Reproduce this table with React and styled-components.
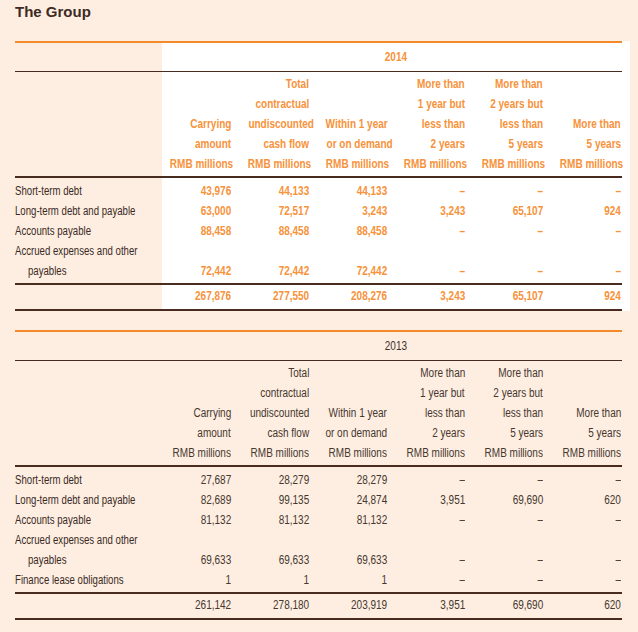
import React from "react";
import styled, { createGlobalStyle } from "styled-components";

const GlobalStyle = createGlobalStyle`
  html, body {
    margin: 0;
    padding: 0;
    background: #fdeee1;
  }
  body {
    font-family: "Liberation Sans", Arial, sans-serif;
  }
`;

const Page = styled.div`
  width: 638px;
  height: 632px;
  box-sizing: border-box;
  padding: 3px 0 0 15px;
  overflow: hidden;
`;

const Title = styled.h2`
  margin: 0 0 20px;
  font: bold 15px/18px "Liberation Sans", Arial, sans-serif;
  color: #3d2a24;
`;

const Section = styled.div`
  width: 615px;
  padding-right: 8px;
  box-sizing: border-box;
  margin-bottom: 19px;
  background: ${(p) =>
    p.$highlight ? "linear-gradient(to right, transparent 147px, #ffffff 147px)" : "transparent"};
`;

const Row = styled.div`
  display: grid;
  grid-template-columns: 139px repeat(6, 78px);
  font-size: 12.5px;
  line-height: 20px;
`;

const YearRow = styled(Row)`
  border-top: 2px solid #f58a2b;
  border-bottom: 1px solid #4a2b20;
  height: 28px;
  line-height: 28px;
`;

const Year = styled.div`
  grid-column: 2 / 8;
  padding-left: 16px;
  text-align: center;
  color: ${(p) => (p.$accent ? "#f7923a" : "#3f302b")};
  font-weight: ${(p) => (p.$accent ? "bold" : "normal")};
`;

const HeadRow = styled(Row)`
  padding: 2px 0;
  border-bottom: 2px solid #4a2b20;
`;

const Body = styled.div`
  padding: 3px 0 2px;
  border-bottom: 2px solid #4a2b20;
`;

const TotalRow = styled(Row)`
  padding: 1px 0 3px;
  border-bottom: 2px solid #4a2b20;
`;

// condensed face: the reference uses a narrow grotesque we don't have
const Narrow = styled.span`
  display: inline-block;
  white-space: nowrap;
  transform: scaleX(${(p) => p.$scale || 0.8});
  transform-origin: ${(p) => p.$origin || "right"} center;
`;

const Label = styled.div`
  color: #3b2a24;
`;

const LabelLine = styled.div`
  padding-left: ${(p) => (p.$indent ? "13px" : "0")};
`;

const Cell = styled.div`
  align-self: end;
  text-align: right;
  padding-right: 1px;
  color: ${(p) => (p.$accent ? "#f7923a" : "#47372f")};
  font-weight: ${(p) => (p.$accent ? "bold" : "normal")};
`;

const Line = styled.div``;

const headers = [
  ["Carrying", "amount"],
  ["Total", "contractual", "undiscounted", "cash flow"],
  ["Within 1 year", "or on demand"],
  ["More than", "1 year but", "less than", "2 years"],
  ["More than", "2 years but", "less than", "5 years"],
  ["More than", "5 years"],
];

const tables = [
  {
    year: "2014",
    accent: true,
    rows: [
      [["Short-term debt"], "43,976", "44,133", "44,133", "–", "–", "–"],
      [["Long-term debt and payable"], "63,000", "72,517", "3,243", "3,243", "65,107", "924"],
      [["Accounts payable"], "88,458", "88,458", "88,458", "–", "–", "–"],
      [["Accrued expenses and other", "payables"], "72,442", "72,442", "72,442", "–", "–", "–"],
    ],
    total: ["267,876", "277,550", "208,276", "3,243", "65,107", "924"],
  },
  {
    year: "2013",
    accent: false,
    rows: [
      [["Short-term debt"], "27,687", "28,279", "28,279", "–", "–", "–"],
      [["Long-term debt and payable"], "82,689", "99,135", "24,874", "3,951", "69,690", "620"],
      [["Accounts payable"], "81,132", "81,132", "81,132", "–", "–", "–"],
      [["Accrued expenses and other", "payables"], "69,633", "69,633", "69,633", "–", "–", "–"],
      [["Finance lease obligations"], "1", "1", "1", "–", "–", "–"],
    ],
    total: ["261,142", "278,180", "203,919", "3,951", "69,690", "620"],
  },
];

function LiquidityTable({ table }) {
  const { year, accent, rows, total } = table;
  return (
    <Section $highlight={accent}>
      <YearRow>
        <Year $accent={accent}>
          <Narrow $origin="center">{year}</Narrow>
        </Year>
      </YearRow>
      <HeadRow>
        <div />
        {headers.map((lines, i) => (
          <Cell key={i} $accent={accent}>
            {[...lines, "RMB millions"].map((l, j) => (
              <Line key={j}>
                <Narrow>{l}</Narrow>
              </Line>
            ))}
          </Cell>
        ))}
      </HeadRow>
      <Body>
        {rows.map(([label, ...values]) => (
          <Row key={label[0]}>
            <Label>
              {label.map((l, j) => (
                <LabelLine key={j} $indent={j > 0}>
                  <Narrow $origin="left" $scale={0.77}>
                    {l}
                  </Narrow>
                </LabelLine>
              ))}
            </Label>
            {values.map((v, i) => (
              <Cell key={i} $accent={accent}>
                <Narrow>{v}</Narrow>
              </Cell>
            ))}
          </Row>
        ))}
      </Body>
      <TotalRow>
        <div />
        {total.map((v, i) => (
          <Cell key={i} $accent={accent}>
            <Narrow>{v}</Narrow>
          </Cell>
        ))}
      </TotalRow>
    </Section>
  );
}

export default function App() {
  return (
    <Page>
      <GlobalStyle />
      <Title>The Group</Title>
      {tables.map((t) => (
        <LiquidityTable key={t.year} table={t} />
      ))}
    </Page>
  );
}
